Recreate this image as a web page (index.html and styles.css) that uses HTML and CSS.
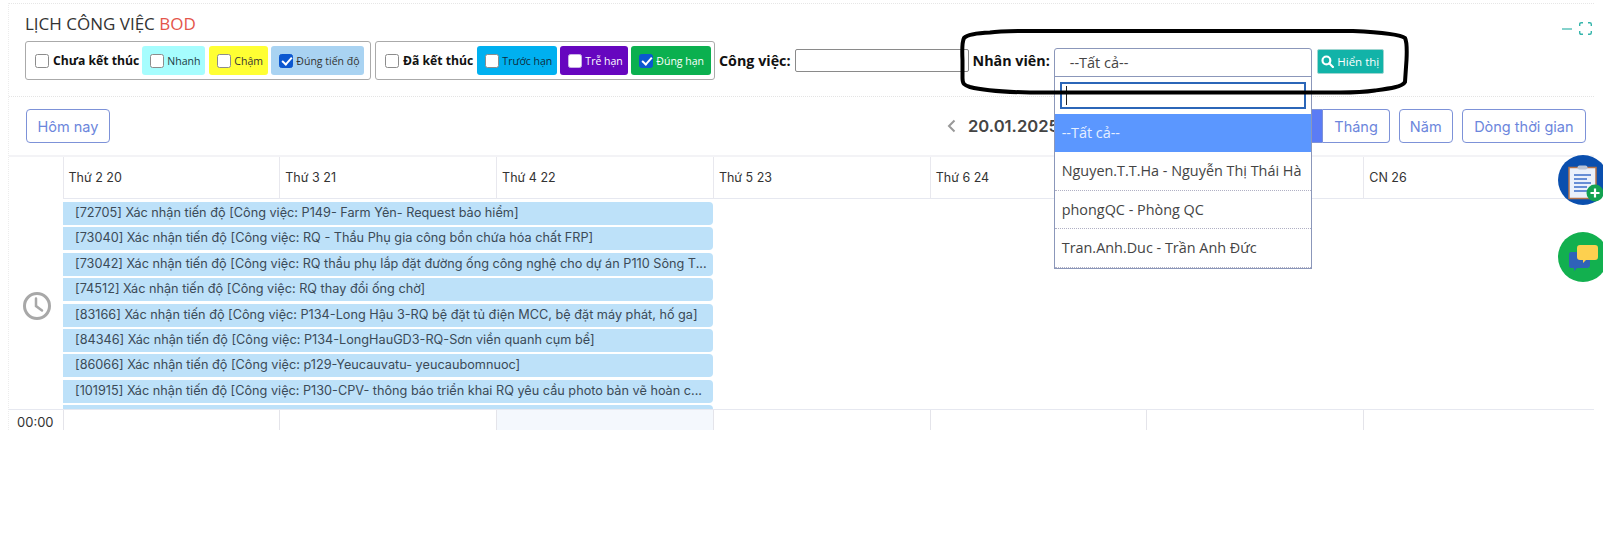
FILE: index.html
```html
<!DOCTYPE html>
<html lang="vi">
<head>
<meta charset="utf-8">
<title>Lịch công việc BOD</title>
<link rel="stylesheet" href="styles.css">
</head>
<body>
<div class="page">
  <header class="head">
    <div class="head-top">
      <h1 class="title">LỊCH CÔNG VIỆC <span class="title-red">BOD</span></h1>
      <div class="win-tools">
        <svg class="win-min" width="10" height="2" viewBox="0 0 10 2"><path d="M0 1h10" stroke="#35b5ab" stroke-width="1.2"/></svg>
        <svg class="win-full" width="13" height="13" viewBox="0 0 13 13" fill="none" stroke="#35b5ab" stroke-width="1.4"><path d="M.7 4V2.200Q.7.7 2.200.7H4M9 .7h1.800q1.500 0 1.500 1.500V4M12.300 9v1.800q0 1.500-1.500 1.500H9M4 12.300H2.200Q.7 12.300.7 10.800V9"/></svg>
      </div>
    </div>
    <div class="filters">
      <div class="group group-a">
        <label class="chk-main"><input type="checkbox"><span>Chưa kết thúc</span></label>
        <label class="tag tag-fast"><input type="checkbox"><span>Nhanh</span></label>
        <label class="tag tag-slow"><input type="checkbox"><span>Chậm</span></label>
        <label class="tag tag-ontrack"><input type="checkbox" checked><span>Đúng tiến độ</span></label>
      </div>
      <div class="group group-b">
        <label class="chk-main"><input type="checkbox"><span>Đã kết thúc</span></label>
        <label class="tag tag-early"><input type="checkbox"><span>Trước hạn</span></label>
        <label class="tag tag-late"><input type="checkbox"><span>Trễ hạn</span></label>
        <label class="tag tag-ontime"><input type="checkbox" checked><span>Đúng hạn</span></label>
      </div>
      <label class="field-label field-job">Công việc:</label>
      <input class="job-input" type="text">
      <label class="field-label field-staff">Nhân viên:</label>
      <div class="select">
        <div class="select-value">--Tất cả--</div>
        <div class="dropdown">
          <div class="search"><span class="caret"></span></div>
          <ul class="options">
            <li class="option option-active">--Tất cả--</li>
            <li class="option">Nguyen.T.T.Ha - Nguyễn Thị Thái Hà</li>
            <li class="option">phongQC - Phòng QC</li>
            <li class="option">Tran.Anh.Duc - Trần Anh Đức</li>
          </ul>
        </div>
      </div>
      <button class="show-btn" type="button">
        <svg width="13" height="13" viewBox="0 0 12 12" fill="none" stroke="#fff" stroke-width="2"><circle cx="5" cy="5" r="3.600"/><path d="M7.800 7.800 11 11" stroke-linecap="round"/></svg>
        Hiển thị
      </button>
    </div>
  </header>

  <div class="toolbar">
    <button class="btn btn-today" type="button">Hôm nay</button>
    <div class="date-nav">
      <svg width="9" height="14" viewBox="0 0 9 14" fill="none" stroke="#999" stroke-width="2"><path d="M7.500 1.500 2 7l5.500 5.500"/></svg>
      <span class="date-text">20.01.2025 - 26.01.2025</span>
    </div>
    <div class="views">
      <button class="btn btn-active" type="button">Tuần</button>
      <button class="btn btn-month" type="button">Tháng</button>
      <button class="btn btn-year" type="button">Năm</button>
      <button class="btn btn-timeline" type="button">Dòng thời gian</button>
    </div>
  </div>

  <section class="calendar">
    <div class="cal-row cal-head">
      <div class="gutter"></div>
      <div class="day">Thứ 2 20</div>
      <div class="day">Thứ 3 21</div>
      <div class="day">Thứ 4 22</div>
      <div class="day">Thứ 5 23</div>
      <div class="day">Thứ 6 24</div>
      <div class="day">Thứ 7 25</div>
      <div class="day">CN 26</div>
    </div>
    <div class="cal-row cal-allday">
      <div class="gutter clock-cell">
        <svg width="30" height="30" viewBox="0 0 30 30" fill="none" stroke="#a8a8a8" stroke-width="3"><circle cx="15" cy="15" r="12.500"/><path d="M14 7.500V15l6 4.500" stroke-width="2.500" stroke-linecap="round"/></svg>
      </div>
      <div class="events">
        <div class="event">[72705] Xác nhận tiến độ [Công việc: P149- Farm Yên- Request bảo hiểm]</div>
        <div class="event">[73040] Xác nhận tiến độ [Công việc: RQ - Thầu Phụ gia công bồn chứa hóa chất FRP]</div>
        <div class="event">[73042] Xác nhận tiến độ [Công việc: RQ thầu phụ lắp đặt đường ống công nghệ cho dự án P110 Sông T...</div>
        <div class="event">[74512] Xác nhận tiến độ [Công việc: RQ thay đổi ống chờ]</div>
        <div class="event">[83166] Xác nhận tiến độ [Công việc: P134-Long Hậu 3-RQ bệ đặt tủ điện MCC, bệ đặt máy phát, hố ga]</div>
        <div class="event">[84346] Xác nhận tiến độ [Công việc: P134-LongHauGD3-RQ-Sơn viền quanh cụm bể]</div>
        <div class="event">[86066] Xác nhận tiến độ [Công việc: p129-Yeucauvatu- yeucaubomnuoc]</div>
        <div class="event">[101915] Xác nhận tiến độ [Công việc: P130-CPV- thông báo triển khai RQ yêu cầu photo bản vẽ hoàn c...</div>
        <div class="event"></div>
      </div>
    </div>
    <div class="cal-row cal-time">
      <div class="gutter time-label">00:00</div>
      <div class="slot"></div>
      <div class="slot"></div>
      <div class="slot slot-today"></div>
      <div class="slot"></div>
      <div class="slot"></div>
      <div class="slot"></div>
      <div class="slot"></div>
    </div>
  </section>
</div>

<div class="fab fab-task">
  <svg width="50" height="50" viewBox="0 0 50 50">
    <rect x="11" y="12.500" width="27" height="31" fill="#eaf0fb" stroke="#b5734a" stroke-width="1.500"/>
    <rect x="19.500" y="10.500" width="10" height="4" rx="2" fill="#b9c4d6"/>
    <path d="M16 20h17M16 24h13M16 28h17M16 32h13M16 36h15" stroke="#3b6cc9" stroke-width="1.500"/>
    <circle cx="37" cy="38" r="8.500" fill="#12a150"/>
    <path d="M37 33.500v9M32.500 38h9" stroke="#fff" stroke-width="2.200"/>
  </svg>
</div>
<div class="fab fab-chat">
  <svg width="50" height="50" viewBox="0 0 50 50">
    <path d="M13 20h16q3 0 3 3v10q0 3-3 3H19l-3 3v-3h-3q-2 0-2-3V23q0-3 2-3z" fill="#2f62b8"/>
    <path d="M22 13h15q3 0 3 3v9q0 3-3 3h-9l-3 3v-3h-3q-3 0-3-3v-9q0-3 3-3z" fill="#fdd04f"/>
  </svg>
</div>

<svg class="annotation" width="1603" height="548" viewBox="0 0 1603 548" fill="none">
  <path d="M962.500 60C962 50 962 42 964 38C968 34 978 33 990 32.500C1000 31 1010 31 1030 31L1353 31C1375 32 1400 34 1405 38C1407 42 1407 50 1406.500 60L1405 82C1402 87 1390 88.500 1375 90.500C1365 92 1358 92.500 1340 92.500L1030 92.500C1005 92 985 91 970 87C964 85 962.500 84 962.500 78Z" stroke="#000" stroke-width="4"/>
</svg>
</body>
</html>
```
FILE: styles.css
```css
* { box-sizing: border-box; }
html, body { margin: 0; padding: 0; background: #fff; }
body {
  position: relative;
  width: 1603px;
  height: 548px;
  overflow: hidden;
  font-family: "Open Sans", "Liberation Sans", sans-serif;
  color: #222;
}
.page {
  margin: 3px 9px 0 8px;
  border-top: 1px dotted #e6e6e6;
  border-left: 1px dotted #ececec;
  height: 427px;
  overflow: hidden;
}
.head {
  height: 93px;
  padding: 0 0 0 16px;
  border-bottom: 1px dotted #e4e4e4;
}
.head-top {
  display: flex;
  justify-content: space-between;
  height: 37px;
}
.title {
  margin: 10px 0 0;
  font-size: 17px;
  line-height: 20px;
  font-weight: 400;
  color: #333;
}
.title-red { color: #e4554a; }
.win-tools {
  display: flex;
  align-items: center;
  gap: 7px;
  margin: 18px 2px 0 0;
  height: 13px;
}
.filters {
  display: flex;
  align-items: center;
  height: 39px;
}
.group {
  display: flex;
  align-items: center;
  height: 39px;
  padding: 0 5px 0 9px;
  border: 1px solid #aaa;
  border-radius: 3px;
  background: #fff;
}
.group-a { width: 346px; margin-right: 4px; }
.group-b { width: 340px; }
.chk-main {
  display: flex;
  align-items: center;
  font-size: 12.200px;
  font-weight: 700;
  color: #111;
  white-space: nowrap;
}
.chk-main span { margin-left: 4px; }
.tag {
  display: flex;
  align-items: center;
  flex: none;
  height: 29px;
  padding: 0 2px 0 8px;
  border-radius: 3px;
  font-size: 10.500px;
  white-space: nowrap;
}
.tag span { margin-left: 3px; margin-top: 1px; }
.group input[type="checkbox"] {
  appearance: none;
  position: relative;
  flex: none;
  width: 14px;
  height: 14px;
  margin: 0;
  background: #fff;
  border: 1.500px solid #8c8c8c;
  border-radius: 2.500px;
}
.group input[type="checkbox"]:checked {
  background: #0b57d0;
  border-color: #0b57d0;
}
.group input[type="checkbox"]:checked::after {
  content: "";
  position: absolute;
  left: 3.500px;
  top: 0.500px;
  width: 4px;
  height: 8px;
  border: solid #fff;
  border-width: 0 2px 2px 0;
  transform: rotate(42deg);
}
.tag-fast { background: #a6fdfe; color: #1c3b44; width: 63px; margin-left: 3px; }
.tag-slow { background: #ffff33; color: #333; width: 59px; margin-left: 4px; }
.tag-ontrack { background: #a9d3f2; color: #333; width: 93px; margin-left: 3px; }
.tag-early { background: #00b0f0; color: #0f2d3d; width: 80px; margin-left: 4px; }
.tag-late { background: #6606bf; color: #fff; width: 68px; margin-left: 3px; }
.tag-late input[type="checkbox"] { border-color: #c9b3e6; }
.tag-ontime { background: #0bb04f; color: #fff; width: 80px; margin-left: 3px; }
.field-label {
  font-size: 14.300px;
  font-weight: 700;
  color: #111;
  white-space: nowrap;
}
.field-job { margin-left: 4px; }
.job-input {
  width: 174px;
  height: 23px;
  margin: 0 0 0 4px;
  padding: 0 4px;
  border: 1px solid #8a8a8a;
  border-radius: 2px;
  background: #fff;
  outline: 0;
}
.field-staff { margin-left: 4px; }
.select {
  position: relative;
  flex: none;
  width: 258px;
  height: 29px;
  margin: 3px 0 0 4px;
  border: 1px solid #8b97ba;
  border-radius: 3px 3px 0 0;
  background: #fff;
}
.select-value {
  padding-left: 15px;
  font-size: 14.500px;
  line-height: 27px;
  color: #444;
}
.dropdown {
  position: absolute;
  left: -1px;
  top: 27px;
  z-index: 5;
  width: 258px;
  height: 193px;
  border: 1px solid #8b97ba;
  background: #fff;
}
.search {
  position: relative;
  height: 27px;
  margin: 5px 5px 5px;
  border: 2px solid #2b66b8;
}
.caret {
  position: absolute;
  left: 4px;
  top: 2px;
  width: 1px;
  height: 19px;
  background: #222;
}
.options {
  margin: 0;
  padding: 0;
  list-style: none;
}
.option {
  height: 38.500px;
  padding-left: 7px;
  border-bottom: 1px dotted #b0b0c4;
  font-size: 14.400px;
  line-height: 38px;
  color: #444;
  white-space: nowrap;
}
.option-active {
  background: #5b97ff;
  border-bottom: 0;
  color: #e6efff;
}
.show-btn {
  display: flex;
  align-items: center;
  justify-content: center;
  gap: 3px;
  flex: none;
  width: 67px;
  height: 25px;
  margin: 2px 0 0 5px;
  padding: 0;
  border: 1px solid #9fd6d1;
  border-radius: 2px;
  background: #12b3a8;
  color: #fff;
  font-family: "Open Sans", sans-serif;
  font-size: 11.500px;
}
.toolbar {
  display: flex;
  align-items: center;
  height: 34px;
  margin-top: 12px;
  padding-left: 17px;
}
.btn {
  height: 34px;
  padding: 0 12px;
  border: 1px solid #7d92d8;
  border-radius: 4px;
  background: #fff;
  color: #6c86dc;
  font-family: Inter, "Liberation Sans", sans-serif;
  font-size: 14.500px;
  white-space: nowrap;
}
.btn-today { width: 84px; padding: 0; }
.btn-year { padding: 0 10px; }
.btn-timeline { padding: 0 11.500px; }
.date-nav {
  display: flex;
  align-items: center;
  gap: 12px;
  margin-left: 837px;
  width: 340px;
}
.date-text {
  font-family: Inter, "Liberation Sans", sans-serif;
  font-size: 16.600px;
  font-weight: 600;
  color: #444;
  white-space: nowrap;
}
.views {
  position: absolute;
  right: 17px;
  top: 109px;
  display: flex;
  gap: 9px;
}
.btn-active {
  background: #5b7cf5;
  color: #fff;
  border-radius: 4px 0 0 4px;
  margin-right: -9px;
}
.btn-month { border-radius: 0 4px 4px 0; border-left: 0; padding: 0 11px; }
.calendar {
  margin-top: 12px;
  font-family: Inter, "Liberation Sans", sans-serif;
  font-size: 13px;
  color: #333;
}
.cal-row {
  display: grid;
  grid-template-columns: 53.500px repeat(7, 216.800px);
}
.cal-head {
  height: 44px;
  border-top: 2px solid #f3f3f6;
  border-bottom: 1px solid #e6e8f0;
}
.cal-head .gutter { background: #fff; }
.day {
  padding-left: 5px;
  border-left: 1px solid #e8e8ee;
  font-size: 12.500px;
  line-height: 42px;
  color: #333;
}
.cal-allday {
  height: 211px;
  border-bottom: 1px solid #e6e8f0;
}
.clock-cell {
  display: flex;
  align-items: center;
  justify-content: center;
  padding: 4px 0 0 2px;
}
.events {
  grid-column: 2 / span 3;
  display: flex;
  flex-direction: column;
  gap: 2.400px;
  padding-top: 3px;
  overflow: hidden;
}
.event {
  flex: none;
  height: 23px;
  padding-left: 12.500px;
  border-radius: 0 4px 4px 0;
  background: #bde1f9;
  color: #3b4a57;
  font-size: 12.700px;
  line-height: 22px;
  white-space: nowrap;
  overflow: hidden;
}
.cal-time { height: 30px; }
.time-label {
  padding: 2px 0 0 8px;
  line-height: 20px;
  color: #333;
}
.slot { border-left: 1px solid #e4e4ea; }
.slot-today { background: #f4f8fd; }
.fab {
  position: absolute;
  left: 1558px;
  width: 50px;
  height: 50px;
  border-radius: 50%;
}
.fab-task { top: 155px; background: #0a4fae; }
.fab-chat { top: 232px; background: #12b04f; }
.fab svg { display: block; }
.annotation {
  position: absolute;
  left: 0;
  top: 0;
  z-index: 10;
  pointer-events: none;
}
```
